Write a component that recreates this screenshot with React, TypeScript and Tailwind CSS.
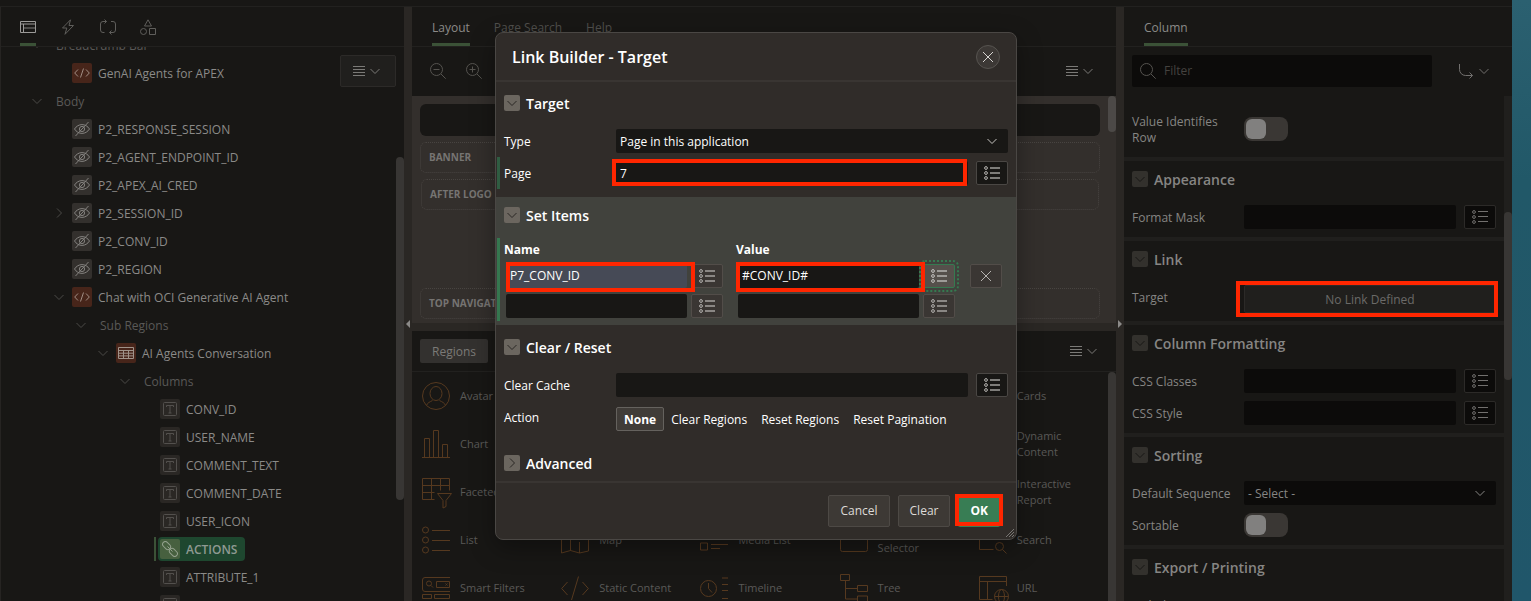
import type { ReactNode } from "react";

/* ---------- icons ---------- */

function Chevron({ className = "", dir = "down" }: { className?: string; dir?: "down" | "right" }) {
  return (
    <svg viewBox="0 0 16 16" className={`size-4 shrink-0 ${className}`} fill="none" stroke="currentColor" aria-hidden="true">
      <path d={dir === "down" ? "M3.5 6l4.5 4.5L12.5 6" : "M6 3.5l4.5 4.5L6 12.5"} />
    </svg>
  );
}

function MenuLines({ className = "" }: { className?: string }) {
  return (
    <svg viewBox="0 0 12 12" className={`size-3 shrink-0 ${className}`} fill="none" stroke="currentColor" aria-hidden="true">
      <path d="M0 1.5h12M0 4.5h12M0 7.5h12M0 10.5h12" />
    </svg>
  );
}

function ListIcon({ bold = false }: { bold?: boolean }) {
  return (
    <svg viewBox="0 0 16 16" className="size-4 shrink-0" fill="none" stroke="currentColor" aria-hidden="true">
      <circle cx="2" cy="3" r="1.4" />
      <circle cx="2" cy="8" r="1.4" />
      <circle cx="2" cy="13" r="1.4" />
      {bold ? <path strokeWidth="2" opacity=".65" d="M6 3h10M6 8h10M6 13h10" /> : <path d="M6 2.5h10M6 7.5h10M6 12.5h10" />}
    </svg>
  );
}

function Magnifier({ sign }: { sign?: "plus" | "minus" }) {
  return (
    <svg viewBox="0 0 16 16" className="size-4 shrink-0" fill="none" stroke="currentColor" aria-hidden="true">
      <circle cx="6.5" cy="6.5" r="6" />
      <path d="M11 11l4.7 4.7" />
      {sign && <path d="M3.5 6.5h6" />}
      {sign === "plus" && <path d="M6.5 3.5v6" />}
    </svg>
  );
}

type NodeIcon = "code" | "hidden" | "grid" | "text" | "link";

const nodeBg: Record<NodeIcon, string> = {
  code: "bg-[#47251a] text-[#a08d84]",
  hidden: "bg-[#33302d] text-[#84827f]",
  grid: "bg-[#47251a] text-[#a0938a]",
  text: "bg-[#2a2724] text-[#53504d]",
  link: "bg-[#47603f] text-[#93a08c]",
};

function TreeIcon({ kind }: { kind: NodeIcon }) {
  return (
    <span className={`ml-[5px] flex size-5 shrink-0 items-center justify-center rounded-xs ${nodeBg[kind]}`}>
      <svg viewBox="0 0 16 16" className="size-4" fill="none" stroke="currentColor" aria-hidden="true">
        {kind === "code" && <path d="M4 4.5L.7 8 4 11.5M12 4.5L15.3 8 12 11.5M9.5 3.5l-3 9" />}
        {kind === "hidden" && (
          <>
            <path d="M.5 8C2.3 5.2 5 3.6 8 3.6S13.7 5.2 15.5 8C13.7 10.8 11 12.4 8 12.4S2.3 10.8.5 8z" />
            <circle cx="8" cy="8" r="2.6" />
            <path d="M14.5 1L1.5 15" />
          </>
        )}
        {kind === "grid" && <path d="M.5 2.5h15v11H.5zM.5 5.5h15M.5 8.2h15M.5 10.9h15M5.500 5.5v8M10.5 5.5v8" />}
        {kind === "text" && (
          <>
            <rect x="1.5" y="1.5" width="13" height="13" rx="1" />
            <path d="M4.5 6V4.5h7V6M8 4.5v7.5M6.5 12h3" />
          </>
        )}
        {kind === "link" && (
          <>
            <rect x="-4.5" y="-2.7" width="9" height="5.4" rx="2.7" transform="translate(4.6 4.6) rotate(45)" />
            <rect x="-4.5" y="-2.7" width="9" height="5.4" rx="2.7" transform="translate(11.4 11.4) rotate(45)" />
            <path d="M5.5 5.5l5 5" />
          </>
        )}
      </svg>
    </span>
  );
}

/* ---------- shared controls ---------- */

function Tab({ label, active = false }: { label: string; active?: boolean }) {
  return (
    <button
      type="button"
      role="tab"
      aria-selected={active}
      className={`h-full border-y-[3px] border-t-transparent pt-0.5 ${active ? "border-b-[#3b5237] text-[#8b8a88]" : "border-b-transparent text-[#504f4c]"}`}
    >
      {label}
    </button>
  );
}

function ListButton({ className, label, bold }: { className: string; label: string; bold?: boolean }) {
  return (
    <button
      type="button"
      aria-label={label}
      className={`flex h-6 w-8 shrink-0 items-center justify-center rounded-xs border ${className}`}
    >
      <ListIcon bold={bold} />
    </button>
  );
}

function Highlight({ className }: { className: string }) {
  return <span className={`pointer-events-none absolute border-4 border-[#ff2600] ${className}`} />;
}

function MenuButton({ className = "", label }: { className?: string; label: string }) {
  return (
    <button type="button" aria-label={label} className={`flex items-center gap-0.5 text-[#7b7a77] ${className}`}>
      <MenuLines />
      <Chevron />
    </button>
  );
}

/* ---------- component tree ---------- */

type TreeNode = { level: number; label: string; icon?: NodeIcon; open?: boolean; closed?: boolean; selected?: boolean };

const nodes: TreeNode[] = [
  { level: 0, label: "Breadcrumb Bar", open: true },
  { level: 1, label: "GenAI Agents for APEX", icon: "code" },
  { level: 0, label: "Body", open: true },
  { level: 1, label: "P2_RESPONSE_SESSION", icon: "hidden" },
  { level: 1, label: "P2_AGENT_ENDPOINT_ID", icon: "hidden" },
  { level: 1, label: "P2_APEX_AI_CRED", icon: "hidden" },
  { level: 1, label: "P2_SESSION_ID", icon: "hidden", closed: true },
  { level: 1, label: "P2_CONV_ID", icon: "hidden" },
  { level: 1, label: "P2_REGION", icon: "hidden" },
  { level: 1, label: "Chat with OCI Generative AI Agent", icon: "code", open: true },
  { level: 2, label: "Sub Regions", open: true },
  { level: 3, label: "AI Agents Conversation", icon: "grid", open: true },
  { level: 4, label: "Columns", open: true },
  { level: 5, label: "CONV_ID", icon: "text" },
  { level: 5, label: "USER_NAME", icon: "text" },
  { level: 5, label: "COMMENT_TEXT", icon: "text" },
  { level: 5, label: "COMMENT_DATE", icon: "text" },
  { level: 5, label: "USER_ICON", icon: "text" },
  { level: 5, label: "ACTIONS", icon: "link", selected: true },
  { level: 5, label: "ATTRIBUTE_1", icon: "text" },
  { level: 5, label: "ATTRIBUTE_2", icon: "text" },
];

const indent = ["pl-7", "pl-[50px]", "pl-[72px]", "pl-[94px]", "pl-[116px]", "pl-[138px]"];

function TreeRow({ node }: { node: TreeNode }) {
  return (
    <li className={`flex h-7 items-center ${indent[node.level]}`}>
      <span className={`flex h-6 justify-end text-[#4b4a47] ${node.selected ? "w-[17px] border-r-2 border-[#3b5237]" : "w-4"}`}>
        {(node.open || node.closed) && <Chevron dir={node.open ? "down" : "right"} className="self-center" />}
      </span>
      {node.selected ? (
        <span className="ml-0.5 flex h-6 items-center rounded-sm bg-[#1e472f] pr-2 font-semibold text-[#8f9a92]">
          <span className="-ml-[3px] flex">
            <TreeIcon kind="link" />
          </span>
          <span className="ml-1.5 pt-0.5">{node.label}</span>
        </span>
      ) : (
        <>
          {node.icon && <TreeIcon kind={node.icon} />}
          <span className={`pt-0.5 ${node.icon ? "ml-1.5 text-[#8b8a88]" : "ml-[11px] text-[#5a5957]"}`}>{node.label}</span>
        </>
      )}
    </li>
  );
}

function TreePanel() {
  return (
    <section className="relative flex w-[404px] shrink-0 flex-col border-l border-[#262422] bg-[#181715]">
      <div className="flex h-10 shrink-0 gap-6 border-b border-[#22211f] pl-[19px] text-[#5f5e5b]">
        <button type="button" aria-label="Rendering" className="border-y-[3px] border-t-transparent border-b-[#3b5237] text-[#9b9a98]">
          <svg viewBox="0 0 16 16" className="size-4" fill="none" stroke="currentColor" aria-hidden="true">
            <path d="M.5 2.5h15v11H.5zM.5 5h15M3.5 5v8.5" />
            <path strokeWidth="2" opacity=".4" d="M4 9h11.5" />
          </svg>
        </button>
        <button type="button" aria-label="Dynamic Actions">
          <svg viewBox="0 0 16 16" className="size-4" fill="none" stroke="currentColor" strokeLinejoin="round" aria-hidden="true">
            <path d="M10.5.8L2.500 9h4.300L5 15.300 13.500 6.500H9L10.500.8z" />
          </svg>
        </button>
        <button type="button" aria-label="Processing">
          <svg viewBox="0 0 16 16" className="size-4" fill="none" stroke="currentColor" aria-hidden="true">
            <path d="M6.5 2.5H3A2.5 2.5 0 0 0 .5 5v6A2.5 2.5 0 0 0 3 13.5h1.5M4.5.5l2 2-2 2M9.5 13.5H13a2.5 2.5 0 0 0 2.5-2.500V5A2.500 2.500 0 0 0 13 2.500h-2M11.500 11.500l-2 2 2 2" />
          </svg>
        </button>
        <button type="button" aria-label="Shared Components">
          <svg viewBox="0 0 16 16" className="size-4" fill="none" stroke="currentColor" aria-hidden="true">
            <path d="M8 .8L4.500 7h7L8 .8zM9.500 9.500h6v6h-6z" />
            <circle cx="3.5" cy="12.5" r="3" />
          </svg>
        </button>
      </div>
      <div className="flex min-h-0 flex-1 justify-between overflow-hidden">
        <ul className="-mt-4">
          {nodes.map((n) => (
            <TreeRow key={n.label} node={n} />
          ))}
        </ul>
        <span className="mt-[110px] h-[343px] w-2 rounded-full bg-[#383634]" />
      </div>
      <MenuButton
        label="Tree options"
        className="absolute top-12 right-2 h-8 w-14 justify-center rounded-xs border border-[#2c2a28] bg-[#201f1d]"
      />
    </section>
  );
}

/* ---------- layout and gallery ---------- */

const galleryArt: Record<string, ReactNode> = {
  Avatar: (
    <>
      <circle cx="14" cy="14" r="13.5" />
      <ellipse cx="14" cy="11.5" rx="6" ry="7" />
      <path d="M4.5 23.5c1-3 3.500-3.500 6-5M23.500 23.500c-1-3-3.500-3.500-6-5" />
    </>
  ),
  Chart: <path d="M0 27.5h28M2.5 27.5v-19h5v19M11.5 27.5V.5h5v27M20.5 27.5v-13h5v13" />,
  "Faceted Search": <path d="M12.5 21.5H.5V.5h27v12M.5 7.5h27M.5 14.5h12M9.5.5v21M18.5.5v12M15.5 15.5h14l-5.5 7v6l-3 1.5v-7.500z" />,
  List: (
    <>
      <circle cx="3.5" cy="4" r="3" />
      <circle cx="3.5" cy="14" r="3" />
      <circle cx="3.5" cy="24" r="3" />
      <path d="M10 4.5h18M10 14.5h18M10 24.5h18" />
    </>
  ),
  Map: <path d="M.5 3.5l9-2.500 9 2.500 9-2.500v24l-9 2-9-2.500-9 2.500zM9.500 10v15M18.500 16v11M18.500 10v3" />,
  "Media List": <path d="M.5 2.500h7v7h-7zM.5 17h7v7h-7zM11 4.500h17M11 8.500h9M11 18.500h17M11 22.500h9" />,
  "Region Display Selector": <path d="M.5 1.500h8v6h-8zM11.500 1.500h16v6h-16zM.5 10v13.500a2 2 0 0 0 2 2h23a2 2 0 0 0 2-2V10z" />,
  Search: (
    <>
      <path d="M27.5 12V2.5H.5v21h14" />
      <circle cx="20.5" cy="20.5" r="4" />
      <path d="M23.5 23.5l4 4" />
    </>
  ),
  "Smart Filters": (
    <>
      <path d="M28 3.5H3A2.5 2.5 0 0 0 .5 6v9A2.5 2.5 0 0 0 3 17.5h25M14.5 7.500h13v6h-13zM23.500 9.500l2 2M25.500 9.500l-2 2M.5 20.500h9v4h-9zM12.500 20.500h15v4h-15z" />
      <circle cx="7" cy="9.5" r="2.5" />
      <path d="M9 11.5l2 2" />
    </>
  ),
  "Static Content": <path d="M6.5 8L.7 14.5 6.5 21M21.5 8l5.8 6.5-5.8 6.5M17.5 2.5L10.500 26" />,
  Timeline: (
    <>
      <circle cx="8.5" cy="14.5" r="8" />
      <path d="M8.5 9v5.5l3.5 4M22 4h6M22 10.5h6M22 16.5h6M22 24.5h6" />
    </>
  ),
  Tree: <path d="M.5.5h9v6h-9zM5.5 6.5V25H17M5.5 14.5H17M17.5 11.5h10v6h-10zM17.5 22h10v6h-10z" />,
  URL: (
    <>
      <path d="M27.5 12V2.5H.5v23h13M.5 7.5h27M8.5 7.5v18" />
      <circle cx="22.5" cy="22.5" r="7" />
      <ellipse cx="22.5" cy="22.5" rx="3" ry="7" />
      <path d="M15.5 22.5h14" />
    </>
  ),
};

const gallery = [
  ["Avatar", "", "", "", "Cards"],
  ["Chart", "", "", "", "Dynamic Content"],
  ["Faceted Search", "", "", "", "Interactive Report"],
  ["List", "Map", "Media List", "Region Display Selector", "Search"],
  ["Smart Filters", "Static Content", "Timeline", "Tree", "URL"],
];

function Slot({ children, className = "" }: { children: ReactNode; className?: string }) {
  return (
    <div className={`flex h-[31px] items-center rounded-md border border-dotted border-[#484441] px-2 text-[10px] font-bold text-[#767472] ${className}`}>
      {children}
    </div>
  );
}

function LayoutPanel() {
  return (
    <section className="flex min-w-0 flex-1 flex-col bg-[#181715]">
      <div role="tablist" className="flex h-10 shrink-0 gap-6 border-b border-[#22211f] pl-5">
        <Tab label="Layout" active />
        <Tab label="Page Search" />
        <Tab label="Help" />
      </div>
      <div className="flex h-[49px] shrink-0 items-center gap-5 pr-5 pb-px pl-[18px] text-[#55534f]">
        <button type="button" aria-label="Zoom out">
          <Magnifier sign="minus" />
        </button>
        <button type="button" aria-label="Zoom in">
          <Magnifier sign="plus" />
        </button>
        <MenuButton label="Layout options" className="ml-auto" />
      </div>
      <div className="flex h-[227px] shrink-0 justify-between bg-[#332f2c]">
        <div className="flex-1 p-2">
          <div className="h-8 rounded-md bg-[#181715]" />
          <Slot className="mt-1.5">BANNER</Slot>
          <Slot className="mx-px mt-1.5">AFTER LOGO</Slot>
          <Slot className="mt-[78px]">TOP NAVIGATION</Slot>
        </div>
        <span className="h-9 w-2 rounded-full bg-[#4c4947]" />
      </div>
      <div className="h-2 shrink-0 bg-[#2a2724]" />
      <div className="flex h-[41px] shrink-0 items-center border-b border-[#22211f] pr-4 pl-2">
        <button type="button" className="h-6 rounded-xs bg-[#33312f] px-3 pt-0.5 text-[#7b7a77]">
          Regions
        </button>
        <MenuButton label="Gallery options" className="ml-auto" />
      </div>
      <div className="flex min-h-0 flex-1 overflow-hidden">
        <ul className="grid h-max flex-1 grid-cols-5">
          {gallery.flat().map((name, i) => (
            <li key={i} className="flex h-12 items-center gap-2.5 pr-2 pl-2.5 text-[11px] leading-4 text-[#5a5957]">
              {name && (
                <>
                  <svg viewBox="0 0 28 28" className="size-7 shrink-0 overflow-visible text-[#56391f]" fill="none" stroke="currentColor" aria-hidden="true">
                    {galleryArt[name]}
                  </svg>
                  <span>{name}</span>
                </>
              )}
            </li>
          ))}
        </ul>
        <span className="w-2 rounded-t-full bg-[#383634]" />
      </div>
    </section>
  );
}

/* ---------- property editor ---------- */

function Group({ title, children, tone = "dim", open = true, className = "" }: { title: string; children?: ReactNode; tone?: "dim" | "bright"; open?: boolean; className?: string }) {
  const dim = tone === "dim";
  return (
    <section className={className}>
      <h3 className={`flex h-9 items-center gap-1.5 text-sm font-semibold ${dim ? "text-[#868583]" : "text-white"}`}>
        <button
          type="button"
          aria-label={`Toggle ${title}`}
          className={`flex size-4 items-center justify-center rounded-xs ${dim ? "bg-[#33312d] text-[#181715]" : "bg-[#6b665f] text-[#2a2724]"}`}
        >
          <Chevron dir={open ? "down" : "right"} />
        </button>
        <span className="pt-0.5">{title}</span>
      </h3>
      {children}
    </section>
  );
}

function Field({ label, id, children, className = "" }: { label: string; id: string; children: ReactNode; className?: string }) {
  return (
    <div className={`flex items-start ${className}`}>
      <label htmlFor={id} className="w-[112px] shrink-0 pt-[5px] pr-3 pb-[3px] leading-4">
        {label}
      </label>
      {children}
    </div>
  );
}

function Toggle({ id }: { id: string }) {
  return (
    <span className="relative flex h-6 w-11 self-center">
      <input id={id} type="checkbox" role="switch" className="peer h-6 w-11 appearance-none rounded-lg bg-[#3a3734]" />
      <span className="pointer-events-none absolute top-0.5 left-0.5 size-5 rounded-md bg-[#81807f] peer-checked:left-[22px]" />
    </span>
  );
}

const dimInput = "h-6 min-w-0 flex-1 rounded-xs bg-[#0c0b0a]";
const dimListButton = "ml-2 border-[#2c2a28] bg-[#0c0b0a] text-[#72706e]";
const groupCls = "border-b-4 border-[#201f1d] px-2 pb-2";

function PropertyPanel() {
  return (
    <section className="flex w-[388px] shrink-0 flex-col bg-[#181715]">
      <div role="tablist" className="flex h-10 shrink-0 border-b border-[#22211f] pl-5">
        <Tab label="Column" active />
      </div>
      <div className="flex h-[49px] shrink-0 items-center pr-5 pb-px pl-2">
        <label className="flex h-8 w-[300px] items-center gap-2 rounded-xs bg-[#0c0b0a] px-2 text-[#55534f]">
          <Magnifier />
          <input type="search" aria-label="Filter properties" placeholder="Filter" className="min-w-0 flex-1 outline-none placeholder:text-[#44423f]" />
        </label>
        <button type="button" aria-label="Go to group" className="ml-auto flex items-center gap-0.5 text-[#72706e]">
          <svg viewBox="0 0 16 16" className="size-4" fill="none" stroke="currentColor" aria-hidden="true">
            <path d="M1.5 1v5.5a6 6 0 0 0 6 6h7M11.5 9.5l3 3-3 3" />
          </svg>
          <Chevron />
        </button>
      </div>
      <div className="flex min-h-0 flex-1 overflow-hidden bg-[#201f1d]">
        <div className="h-max flex-1 bg-[#181715] text-[#868583]">
          <div className="border-b-4 border-[#201f1d] px-2 pt-[13px] pb-2">
            <Field label="Value Identifies Row" id="value-identifies-row">
              <Toggle id="value-identifies-row" />
            </Field>
          </div>
          <Group title="Appearance" className={groupCls}>
            <Field label="Format Mask" id="format-mask" className="pt-2">
              <input id="format-mask" type="text" className={dimInput} />
              <ListButton label="Pick format mask" className={dimListButton} />
            </Field>
          </Group>
          <Group title="Link" className={groupCls}>
            <Field label="Target" id="link-target" className="pt-2">
              <span className="relative flex flex-1">
                <button id="link-target" type="button" className="h-7 flex-1 rounded-xs border border-[#2c2a28] bg-[#201f1d] pt-0.5 text-[#6b6a68]">
                  No Link Defined
                </button>
                <Highlight className="-inset-y-1 -right-0.5 -left-2" />
              </span>
            </Field>
          </Group>
          <Group title="Column Formatting" className={groupCls}>
            <Field label="CSS Classes" id="css-classes" className="pt-2">
              <input id="css-classes" type="text" className={dimInput} />
              <ListButton label="Pick CSS classes" className={dimListButton} />
            </Field>
            <Field label="CSS Style" id="css-style" className="pt-2">
              <input id="css-style" type="text" className={dimInput} />
              <ListButton label="Pick CSS style" className={dimListButton} />
            </Field>
          </Group>
          <Group title="Sorting" className={groupCls}>
            <Field label="Default Sequence" id="default-sequence" className="pt-2">
              <span className="relative flex flex-1">
                <select id="default-sequence" className="h-6 flex-1 appearance-none rounded-xs bg-[#0c0b0a] px-1 pt-0.5">
                  <option>- Select -</option>
                </select>
                <Chevron className="pointer-events-none absolute top-1 right-2" />
              </span>
            </Field>
            <Field label="Sortable" id="sortable" className="pt-2">
              <Toggle id="sortable" />
            </Field>
          </Group>
          <Group title="Export / Printing" className={groupCls}>
            <Field label="Include in Export / Print" id="include-export" className="pt-2">
              <Toggle id="include-export" />
            </Field>
          </Group>
        </div>
        <span className="mt-[116px] h-[168px] w-2 rounded-full bg-[#383634]" />
      </div>
    </section>
  );
}

/* ---------- dialog ---------- */

const brightInput = "h-6 min-w-0 flex-1 rounded-xs bg-[#181715] px-1 text-white";
const brightListButton = "border-[#4a4744] bg-[#181715] text-[#b5b3b0]";
const itemButton = "border-[#524d49] bg-[#3a3633] text-[#b5b3b0]";

function ItemCell({ id, value, focusList = false, picked = false }: { id: string; value: string; focusList?: boolean; picked?: boolean }) {
  return (
    <td className="w-[232px] py-[3px] pr-[13px] pl-0.5">
      <span className="relative flex gap-1">
        <input
          type="text"
          aria-label={id}
          defaultValue={value}
          className={`h-6 min-w-0 flex-1 rounded-xs px-1 pb-px text-white ${picked ? "bg-[#464a56]" : "bg-[#181715]"}`}
        />
        <ListButton
          bold
          label={`Pick ${id}`}
          className={focusList ? "border-[#357a50] bg-[#55504b] text-[#c5c3c0] outline-2 outline-offset-2 outline-dotted outline-[#357a50]" : itemButton}
        />
        {value && <Highlight className={`-top-0.5 -bottom-1 ${picked ? "right-7 left-0" : "right-[30px] -left-0.5"}`} />}
      </span>
    </td>
  );
}

function LinkBuilderDialog() {
  return (
    <div
      role="dialog"
      aria-label="Link Builder - Target"
      className="relative h-max w-[522px] rounded-lg border border-[#4a4744] bg-[#302c29] text-white shadow-[0_8px_24px_rgba(0,0,0,0.35)]"
    >
      <header className="flex h-[49px] items-center justify-between border-b-2 border-[#393532] px-4">
        <h2 className="text-base font-semibold">Link Builder - Target</h2>
        <button type="button" aria-label="Close" className="flex size-6 items-center justify-center rounded-full border border-[#575450] bg-[#3c3835] text-[#d5d3d0]">
          <svg viewBox="0 0 16 16" className="size-4 shrink-0" fill="none" stroke="currentColor" aria-hidden="true">
            <path d="M3 3l10 10M13 3L3 13" />
          </svg>
        </button>
      </header>

      <div className="pt-[3px]">
        <Group title="Target" tone="bright" className="px-2 pb-3">
          <Field label="Type" id="link-type" className="pt-2">
            <span className="relative flex flex-1">
              <select id="link-type" className="h-6 flex-1 appearance-none rounded-xs bg-[#181715] px-1 pt-0.5">
                <option>Page in this application</option>
              </select>
              <Chevron className="pointer-events-none absolute top-1 right-2 text-[#c5c3c0]" />
            </span>
          </Field>
          <div className="relative pt-2">
            <span className="absolute top-1 -bottom-1 -left-[7px] w-[3px] bg-[#2f5d42]" />
            <Field label="Page" id="link-page">
              <span className="relative flex flex-1">
                <input id="link-page" type="text" defaultValue="7" className={brightInput} />
                <Highlight className="-top-0.5 right-px -bottom-px -left-1" />
              </span>
              <ListButton bold label="Pick page" className={`ml-2 ${brightListButton}`} />
            </Field>
          </div>
        </Group>

        <Group title="Set Items" tone="bright" className="relative bg-[#41423d] px-2 pb-1">
          <span className="absolute top-[41px] bottom-1 left-px w-[3px] bg-[#35774f]" />
          <table className="border-collapse">
            <thead>
              <tr className="h-7 text-left align-bottom">
                <th className="leading-[22px]">Name</th>
                <th className="leading-[22px]">Value</th>
                <th aria-label="Remove" />
              </tr>
            </thead>
            <tbody>
              <tr>
                <ItemCell id="Item 1 name" value="P7_CONV_ID" picked />
                <ItemCell id="Item 1 value" value="#CONV_ID#" focusList />
                <td className="pl-0.5">
                  <button type="button" aria-label="Remove item 1" className={`flex h-6 w-8 items-center justify-center rounded-xs border ${itemButton}`}>
                    <svg viewBox="0 0 16 16" className="size-4" fill="none" stroke="currentColor" aria-hidden="true">
                      <path d="M3 3l10 10M13 3L3 13" />
                    </svg>
                  </button>
                </td>
              </tr>
              <tr>
                <ItemCell id="Item 2 name" value="" />
                <ItemCell id="Item 2 value" value="" />
                <td />
              </tr>
            </tbody>
          </table>
        </Group>

        <Group title="Clear / Reset" tone="bright" className="px-2 pt-1 pb-3">
          <Field label="Clear Cache" id="clear-cache" className="pt-2">
            <input id="clear-cache" type="text" className={brightInput} />
            <ListButton bold label="Pick cache" className={`ml-2 ${brightListButton}`} />
          </Field>
          <Field label="Action" id="action-none" className="pt-2">
            <div role="radiogroup" aria-label="Action" className="flex h-7 items-center">
              {["None", "Clear Regions", "Reset Regions", "Reset Pagination"].map((option, i) => (
                <label
                  key={option}
                  className="flex h-6 items-center rounded-xs border border-transparent px-[6px] pt-0.5 has-checked:border-[#65625e] has-checked:bg-[#403c38] has-checked:px-[7px] has-checked:font-bold"
                >
                  <input id={i === 0 ? "action-none" : undefined} type="radio" name="action" defaultChecked={i === 0} className="sr-only" />
                  {option}
                </label>
              ))}
            </div>
          </Field>
        </Group>

        <Group title="Advanced" tone="bright" open={false} className="px-2" />
      </div>

      <footer className="flex justify-end gap-2 border-t-2 border-[#393532] px-4 py-3 text-[#dddbd8]">
        <button type="button" className="h-8 rounded-xs border border-[#4d4945] bg-[#3d3935] px-[11px]">
          Cancel
        </button>
        <button type="button" className="h-8 rounded-xs border border-[#4d4945] bg-[#3d3935] px-[11px]">
          Clear
        </button>
        <span className="relative flex">
          <button type="button" className="h-8 rounded-xs bg-[#387d54] px-3 font-bold text-white">
            OK
          </button>
          <Highlight className="-top-px bottom-px -right-[3px] -left-[3px]" />
        </span>
      </footer>
      <svg viewBox="0 0 8 8" className="absolute right-0.5 bottom-0.5 size-2 text-[#8b8986]" fill="none" stroke="currentColor" strokeWidth=".8" aria-hidden="true">
        <path d="M0 8l8-8M3 8l5-5M6 8l2-2" />
      </svg>
    </div>
  );
}

/* ---------- page ---------- */

function Splitter({ arrow }: { arrow: string }) {
  return (
    <div role="separator" className="flex w-2 shrink-0 items-center justify-center bg-[#2a2724] pt-[39px]">
      <span className={`size-0 border-y-4 border-transparent ${arrow}`} />
    </div>
  );
}

export default function App() {
  return (
    <div className="flex h-screen overflow-hidden bg-[#181715] font-['Open_Sans','Noto_Sans',sans-serif] text-xs">
      <div className="relative flex min-w-0 flex-1 flex-col">
        <div className="h-[7px] shrink-0 border-b border-[#22211f]" />
        <main className="flex min-h-0 flex-1">
          <TreePanel />
          <Splitter arrow="border-r-4 border-r-[#8b8a88]" />
          <LayoutPanel />
          <Splitter arrow="border-l-4 border-l-[#8b8a88]" />
          <PropertyPanel />
        </main>
        <div className="absolute inset-0 flex justify-center overflow-hidden pt-8">
          <LinkBuilderDialog />
        </div>
      </div>
      <div className="w-[19px] shrink-0 bg-linear-to-b from-[#2b6070] via-[#215868] via-30% to-[#20566a]" />
    </div>
  );
}
